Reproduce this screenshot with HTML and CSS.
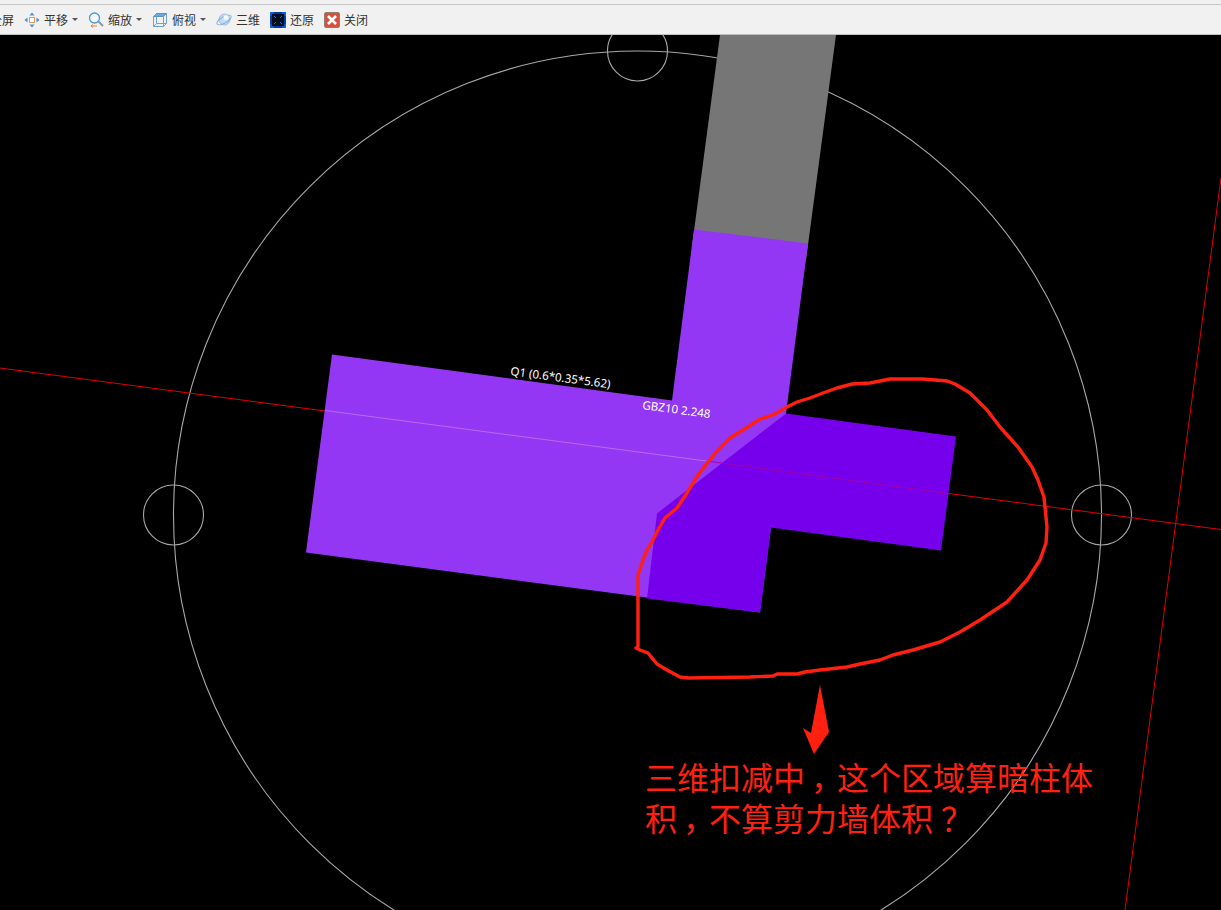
FILE: index.html
```html
<!DOCTYPE html>
<html lang="zh-CN">
<head>
  <meta charset="UTF-8" />
  <title>三维扣减</title>
  <link rel="stylesheet" href="styles.css">
</head>
<body>
  <div class="strip"></div>
  <div class="toolbar">
    <div class="tool tool-cut"><span>全屏</span></div>
    <div class="tool">
      <svg class="icon" viewBox="0 0 16 16">
        <path d="M8 .5l2.500 3h-5zM8 15.500l-2.500-3h5zM.5 8l3-2.500v5zM15.500 8l-3 2.500v-5z" fill="#4a90dc"/>
        <rect x="5.500" y="5.500" width="5" height="5" fill="#fff" stroke="#eb9a5a"/>
      </svg>
      <span>平移</span><i class="caret"></i>
    </div>
    <div class="tool">
      <svg class="icon" viewBox="0 0 16 16">
        <circle cx="6.500" cy="6" r="5" fill="#f2f8fd" stroke="#4a9ad8" stroke-width="1.300"/>
        <path d="M10.500 9.500l4.500 4.500" stroke="#8a9aa8" stroke-width="2"/>
        <path d="M3 14h6M3 14l2-1.500M3 14l2 1.500" stroke="#e8843a" fill="none"/>
      </svg>
      <span>缩放</span><i class="caret"></i>
    </div>
    <div class="tool">
      <svg class="icon" viewBox="0 0 16 16">
        <path d="M1.500 4.500h10v10h-10zM11.500 14.500l3-3v-10M4.500 1.500v10h10M4.500 11.500l-3 3" fill="none" stroke="#6aa4da"/>
        <path d="M1.500 4.500l3-3h10l-3 3z" fill="#6aa8e6" stroke="#5b94c8"/>
      </svg>
      <span>俯视</span><i class="caret"></i>
    </div>
    <div class="tool">
      <svg class="icon" viewBox="0 0 16 16">
        <circle cx="8.500" cy="7.500" r="5.500" fill="#c4dcf4" stroke="#9abce2"/>
        <ellipse cx="8" cy="8" rx="8" ry="3.200" transform="rotate(-30 8 8)" fill="none" stroke="#8ab0dc"/>
        <circle cx="10" cy="5.500" r="2.500" fill="#f0f7fd"/>
      </svg>
      <span>三维</span>
    </div>
    <div class="tool">
      <svg class="icon" viewBox="0 0 16 16">
        <rect width="16" height="16" fill="#02101e"/>
        <rect x="1" y="1" width="14" height="14" fill="none" stroke="#0a48c8" stroke-width="1.500"/>
        <path d="M0 0h4v1.500H1.500V4H0zM16 0v4h-1.500V1.500H12V0zM0 16v-4h1.500v2.500H4V16zM16 16h-4v-1.500h2.500V12H16z" fill="#1060f0"/>
        <path d="M4 4l2 2M12 4l-2 2M4 12l2-2M12 12l-2-2" stroke="#2a70d0"/>
      </svg>
      <span>还原</span>
    </div>
    <div class="tool">
      <svg class="icon" viewBox="0 0 16 16">
        <rect x="0.500" y="0.500" width="15" height="15" rx="1.500" fill="#d8503c" stroke="#8a8078"/>
        <path d="M4 4l8 8M12 4l-8 8" stroke="#fff" stroke-width="2.600"/>
      </svg>
      <span>关闭</span>
    </div>
  </div>

  <div class="canvas">
    <svg class="drawing" viewBox="0 35 1221 875">
      <!-- grid circles -->
      <g class="grid-circle">
        <circle cx="637.500" cy="515" r="464"/>
        <circle cx="173.500" cy="515" r="30"/>
        <circle cx="1101.500" cy="515" r="30"/>
        <circle cx="637.500" cy="51" r="30"/>
      </g>

      <!-- axis lines -->
      <path class="axis" d="M0 368L1221 529.500M1221 178L1125 910"/>

      <!-- wall and column -->
      <polygon class="wall-gray" points="720,35 836,35 806,260 692,246"/>
      <polygon class="wall" points="332,354.500 672,400.500 694,229.500 808,243.500 786,413.500 771,527.500 760,612.500 306,552.500"/>
      <polygon class="column" points="786,413.500 956,436.500 941,550.500 771,527.500 760,612.500 647,598.500 657,513.500"/>

      <path class="axis-wall" d="M325 410.500L710 461.500"/>
      <path class="axis-column" d="M710 461.500L948 493.500"/>

      <text class="label" transform="translate(510 375) rotate(7.600)">Q1 (0.6*0.35*5.62)</text>
      <text class="label" transform="translate(642 409) rotate(7.600)">GBZ10 2.248</text>

      <!-- hand drawn note -->
      <path class="scribble" d="M690 488L698 475L708 462L718 450L730 438L743 430L760 419L773 415L787 407L797 402L810 398L823 393L837 388L852 384L870 383L890 379L923 379L947 381L955 384L970 393L987 410L1000 427L1018 447L1032 467L1038 480L1044 497L1047 527L1046 543L1040 560L1027 580L1007 602L980 620L960 632L940 642L913 650L893 655L880 660L860 664L847 667L820 670L805 672L797 674L777 674L773 676L750 677L688 678L680 677L667 670L657 664L648 653L640 650L636 648L638 647L638 575L643 560L646 552L652 542L658 530L665 518L677 508L687 493L690 488"/>
      <polygon class="arrow" points="820,685 829,732 814,754 803,728 811,733"/>
    </svg>
    <p class="note">三维扣减中<span class="punct">，</span>这个区域算暗柱体积<span class="punct">，</span>不算剪力墙体积<span class="punct">？</span></p>
  </div>
</body>
</html>
```

FILE: styles.css
```css
* {
  box-sizing: border-box;
  margin: 0;
  padding: 0;
}

body {
  width: 1221px;
  height: 910px;
  overflow: hidden;
  background: #000;
  font-family: "Noto Sans CJK SC", sans-serif;
}

.strip {
  height: 4px;
  background: #f0f0f0;
}

.toolbar {
  display: flex;
  align-items: center;
  height: 31px;
  overflow: hidden;
  background: #f1f1f1;
  border-top: 1px solid #c6c6c6;
  border-bottom: 1px solid #c0c0c0;
  color: #333;
  font-size: 12px;
}

.tool {
  display: flex;
  align-items: center;
  flex: none;
  margin-right: 10px;
}

.tool-cut {
  margin-left: -10px;
}

.icon {
  width: 16px;
  height: 16px;
  margin-right: 4px;
}

.caret {
  width: 0;
  height: 0;
  margin-left: 4px;
  border-left: 3px solid transparent;
  border-right: 3px solid transparent;
  border-top: 3px solid #555;
}

.canvas {
  position: relative;
  height: 875px;
}

.drawing {
  display: block;
  width: 1221px;
  height: 875px;
}

.grid-circle circle {
  fill: none;
  stroke: #a8a8a8;
  stroke-width: 1.1;
}

.axis {
  fill: none;
  stroke: #e00000;
}

.wall-gray {
  fill: #767676;
}

.wall {
  fill: #9437f5;
}

.column {
  fill: #7600ec;
}

.axis-wall {
  stroke: #b26cf0;
}

.axis-column {
  stroke: #a400a8;
}

.label {
  fill: #fff;
  font-family: "Noto Sans", sans-serif;
  font-size: 11.6px;
}

.scribble {
  fill: none;
  stroke: #ff2010;
  stroke-width: 3.4;
  stroke-linejoin: round;
}

.arrow {
  fill: #ff2010;
}

.note {
  position: absolute;
  left: 645px;
  top: 721px;
  width: 450px;
  color: #ff2010;
  font-size: 32px;
  line-height: 41px;
}

.punct {
  display: inline-block;
  width: 1em;
  text-align: center;
  font-feature-settings: "palt";
}
```
